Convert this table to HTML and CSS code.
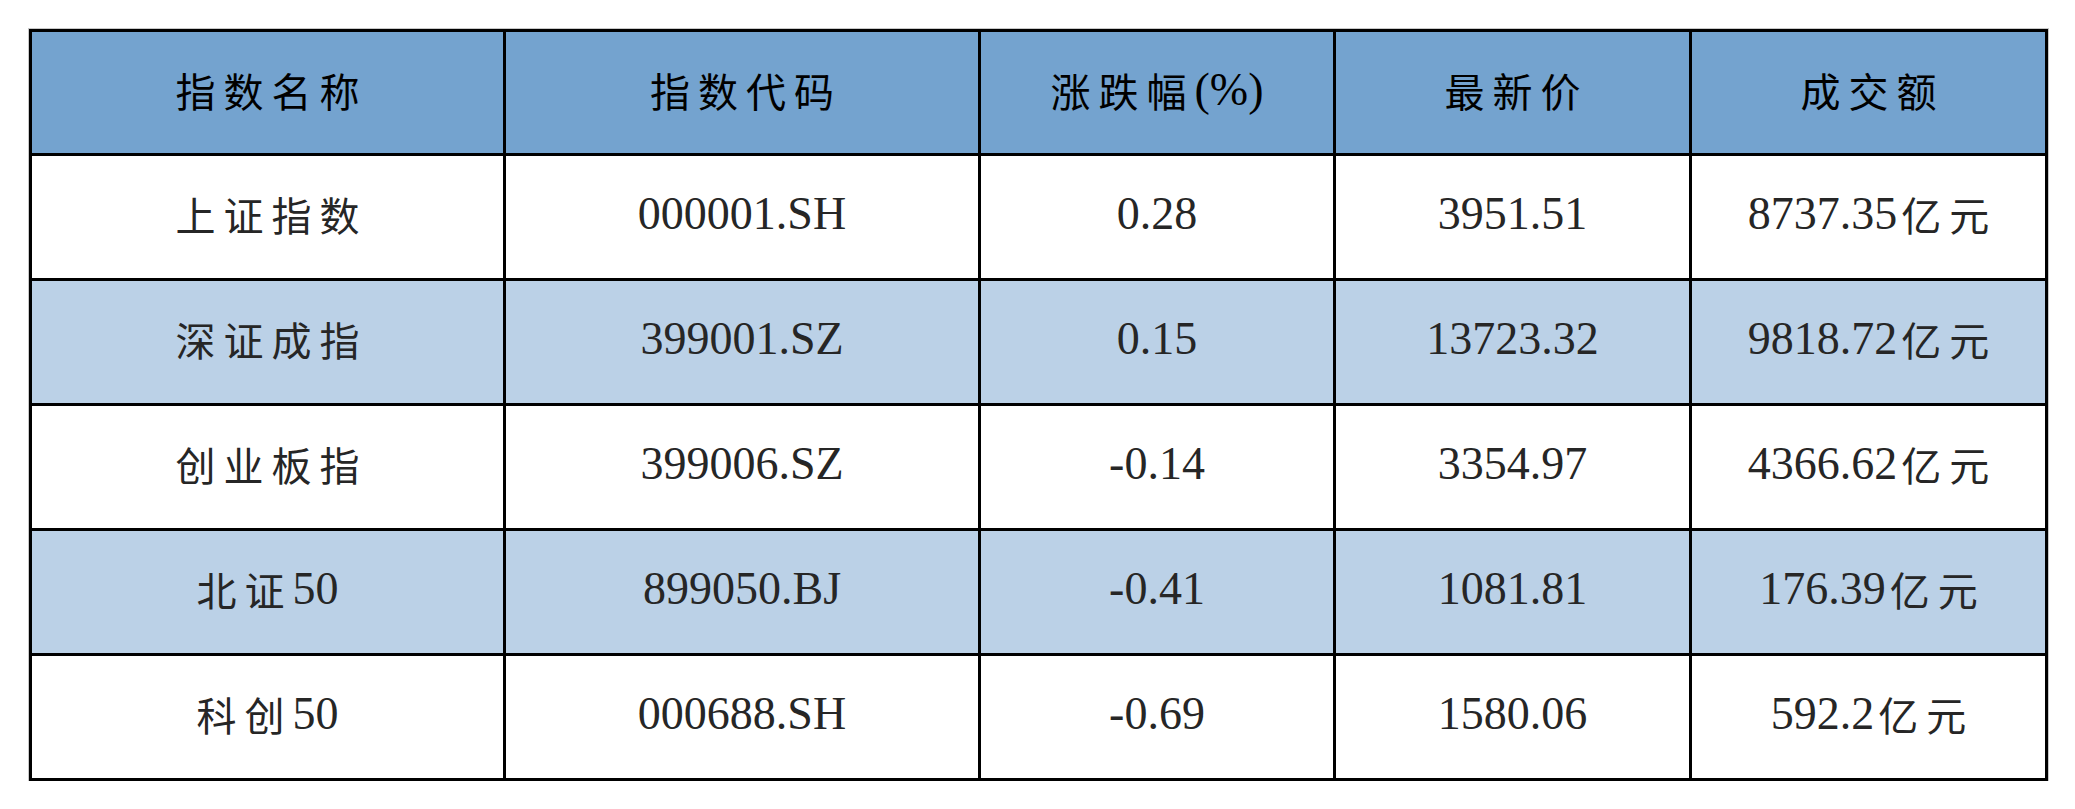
FILE: index.html
```html
<!DOCTYPE html>
<html lang="zh-CN">
<head>
<meta charset="utf-8">
<title>指数行情</title>
<link rel="stylesheet" href="styles.css">
</head>
<body>
<div class="page">
  <div class="grid">
    <div class="cell head"><span class="zh">指数名称</span></div>
    <div class="cell head"><span class="zh">指数代码</span></div>
    <div class="cell head"><span class="zh lead">涨跌幅</span>(%)</div>
    <div class="cell head"><span class="zh">最新价</span></div>
    <div class="cell head"><span class="zh">成交额</span></div>

    <div class="cell"><span class="zh">上证指数</span></div>
    <div class="cell">000001.SH</div>
    <div class="cell">0.28</div>
    <div class="cell">3951.51</div>
    <div class="cell">8737.35<span class="zh tail">亿元</span></div>

    <div class="cell band"><span class="zh">深证成指</span></div>
    <div class="cell band">399001.SZ</div>
    <div class="cell band">0.15</div>
    <div class="cell band">13723.32</div>
    <div class="cell band">9818.72<span class="zh tail">亿元</span></div>

    <div class="cell"><span class="zh">创业板指</span></div>
    <div class="cell">399006.SZ</div>
    <div class="cell">-0.14</div>
    <div class="cell">3354.97</div>
    <div class="cell">4366.62<span class="zh tail">亿元</span></div>

    <div class="cell band"><span class="zh lead">北证</span>50</div>
    <div class="cell band">899050.BJ</div>
    <div class="cell band">-0.41</div>
    <div class="cell band">1081.81</div>
    <div class="cell band">176.39<span class="zh tail">亿元</span></div>

    <div class="cell"><span class="zh lead">科创</span>50</div>
    <div class="cell">000688.SH</div>
    <div class="cell">-0.69</div>
    <div class="cell">1580.06</div>
    <div class="cell">592.2<span class="zh tail">亿元</span></div>
  </div>
</div>
</body>
</html>
```

FILE: styles.css
```css
html, body {
  margin: 0;
  padding: 0;
  background: #ffffff;
}

.page {
  padding: 29px 0 0 29px;
}

.grid {
  display: grid;
  grid-template-columns: 471px 472px 352px 353px 353px;
  grid-template-rows: 121px repeat(5, 122px);
  gap: 3px;
  padding: 3px;
  width: max-content;
  background: #000000;
  box-shadow: 0 0 0 1px #c8c8c8;
}

.cell {
  display: flex;
  align-items: center;
  justify-content: center;
  background: #ffffff;
  color: #262626;
  font-family: "Liberation Serif", "Noto Sans CJK SC", serif;
  font-size: 46px;
  line-height: 1;
  padding-bottom: 6px;
  box-sizing: border-box;
  white-space: nowrap;
}

.cell.head {
  background: #74a3cf;
  color: #000000;
}

.cell.band {
  background: #bbd1e7;
}

.zh {
  font-family: "Noto Sans CJK SC", sans-serif;
  font-size: 40px;
  font-weight: 400;
  letter-spacing: 8px;
  padding-left: 8px;
}

.zh.lead {
  letter-spacing: 8px;
  padding-left: 0;
}

.zh.tail {
  letter-spacing: 0;
  padding-left: 4px;
  word-spacing: 0;
}

.zh.tail::first-letter {
  letter-spacing: 8px;
}
```
